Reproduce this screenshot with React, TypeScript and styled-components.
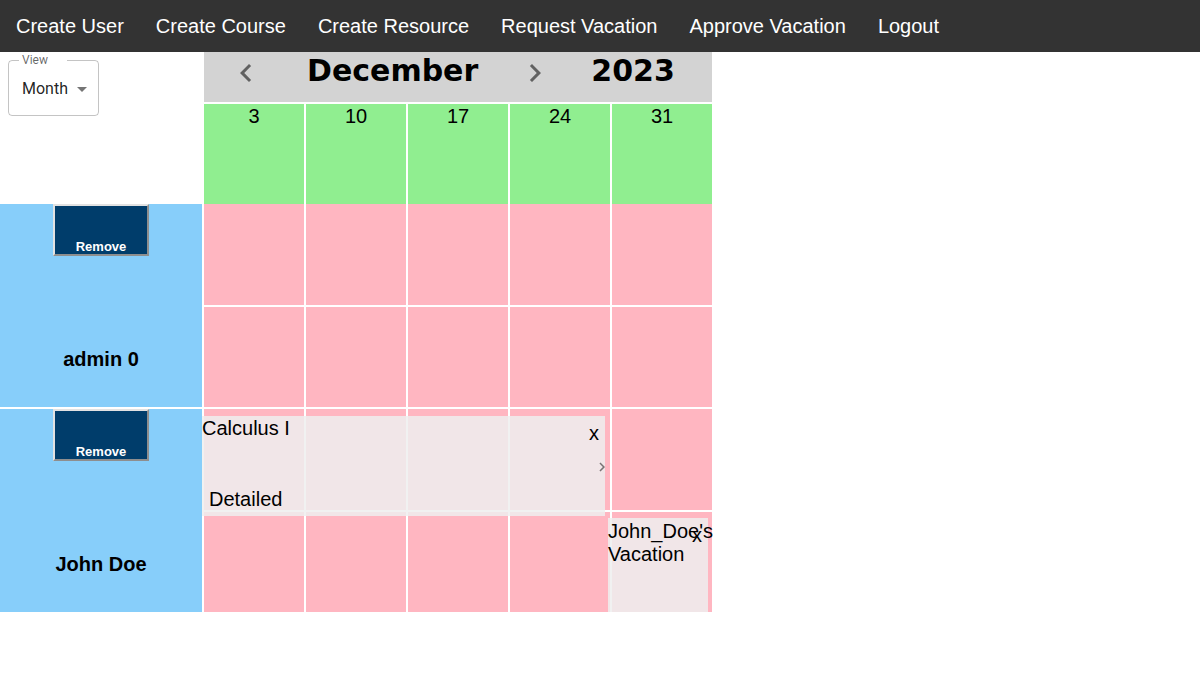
import React from "react";
import styled, { createGlobalStyle } from "styled-components";

const GlobalStyle = createGlobalStyle`
  html, body { margin: 0; padding: 0; background: #ffffff; }
  body { font-family: "Liberation Sans", Arial, sans-serif; color: #000; }
  * { box-sizing: border-box; }
`;

const NavBar = styled.nav`
  display: flex;
  align-items: center;
  height: 52px;
  background: #333333;
`;

const NavLink = styled.a`
  color: #ffffff;
  font-size: 20px;
  line-height: 52px;
  padding: 0 16px;
  text-decoration: none;
  cursor: pointer;
`;

const Board = styled.div`
  display: flex;
  flex-direction: column;
  width: 712px;
`;

const TopSection = styled.div`
  display: grid;
  grid-template-columns: 202px repeat(5, 100px);
  grid-template-rows: 50px 100px;
  column-gap: 2px;
  row-gap: 2px;
`;

const UserList = styled.div`
  display: flex;
  flex-direction: column;
  gap: 2px;
`;

const ViewCell = styled.div`
  grid-column: 1;
  grid-row: 1 / span 2;
  padding: 8px;
  background: #ffffff;
`;

const SelectBox = styled.div`
  position: relative;
  width: 91px;
  height: 56px;
  border: 1px solid rgba(0, 0, 0, 0.23);
  border-radius: 4px;
  display: flex;
  align-items: center;
  padding-left: 13px;
  padding-top: 1px;
  font-family: Roboto, "Liberation Sans", sans-serif;
  font-size: 16px;
  color: rgba(0, 0, 0, 0.87);
`;

const SelectLabel = styled.span`
  position: absolute;
  left: 10px;
  top: -7px;
  width: 48px;
  padding-left: 3px;
  background: #ffffff;
  font-size: 12px;
  line-height: 12px;
  color: rgba(0, 0, 0, 0.6);
`;

const SelectValue = styled.span`
  line-height: 23px;
`;

const MonthHeader = styled.div`
  grid-column: 2 / span 5;
  grid-row: 1;
  background: #d3d3d3;
  display: flex;
  align-items: flex-start;
`;

const NavArrow = styled.svg<{ $ml: number }>`
  width: 36px;
  height: 36px;
  margin-top: 3px;
  margin-left: ${(p) => p.$ml}px;
  fill: rgba(0, 0, 0, 0.54);
  flex: none;
`;

const HeaderText = styled.span<{ $ml: number }>`
  font-family: "DejaVu Sans", Verdana, sans-serif;
  font-weight: bold;
  font-size: 30px;
  line-height: 35px;
  margin-left: ${(p) => p.$ml}px;
  padding-top: 1px;
`;

const DateCell = styled.div`
  grid-row: 2;
  background: #90ee90;
  text-align: center;
  font-size: 20px;
  line-height: 24px;
`;

const UserBlock = styled.div`
  position: relative;
  display: grid;
  grid-template-columns: 202px repeat(5, 100px);
  grid-template-rows: 101px 100px;
  column-gap: 2px;
  row-gap: 2px;
`;

const UserLabel = styled.div`
  grid-column: 1;
  grid-row: 1 / span 2;
  background: #87cefa;
  display: flex;
  flex-direction: column;
  align-items: center;
`;

const RemoveButton = styled.button`
  width: 96px;
  height: 52px;
  background: #003d6b;
  border-width: 2px;
  border-style: solid;
  border-color: #e2e2e2 #8e8e8e #8e8e8e #e2e2e2;
  color: #ffffff;
  font-family: "Liberation Sans", Arial, sans-serif;
  font-weight: bold;
  font-size: 13px;
  line-height: 15px;
  display: flex;
  align-items: flex-end;
  justify-content: center;
  padding: 0;
  cursor: pointer;
`;

const UserName = styled.div`
  margin-top: 92px;
  font-weight: bold;
  font-size: 20px;
  line-height: 23px;
`;

const SlotCell = styled.div`
  background: #ffb6c1;
`;

const EventBox = styled.div<{ $left: number; $top: number; $width: number }>`
  position: absolute;
  left: ${(p) => p.$left}px;
  top: ${(p) => p.$top}px;
  width: ${(p) => p.$width}px;
  height: 100px;
  background: rgba(238, 238, 238, 0.85);
  font-size: 20px;
  line-height: 23px;
  padding-top: ${(p) => (p.$width > 200 ? 1 : 2)}px;
`;

const EventTitle = styled.div`
  padding-right: 8px;
`;

const EventDetail = styled.div`
  margin-top: 48px;
  padding-left: 7px;
`;

const CloseMark = styled.span`
  position: absolute;
  top: 6px;
  right: 6px;
  font-size: 20px;
  line-height: 23px;
  cursor: pointer;
`;

const SmallArrow = styled.svg`
  position: absolute;
  left: 391px;
  top: 42px;
  width: 18px;
  height: 18px;
  fill: rgba(0, 0, 0, 0.5);
`;

const DropArrow = styled.svg`
  width: 24px;
  height: 24px;
  margin-left: 2px;
  fill: rgba(0, 0, 0, 0.54);
`;

const dates = [3, 10, 17, 24, 31];

const Slots = () => (
  <>
    {Array.from({ length: 10 }).map((_, i) => (
      <SlotCell key={i} />
    ))}
  </>
);

export default function App() {
  return (
    <>
      <GlobalStyle />
      <NavBar>
        <NavLink>Create User</NavLink>
        <NavLink>Create Course</NavLink>
        <NavLink>Create Resource</NavLink>
        <NavLink>Request Vacation</NavLink>
        <NavLink>Approve Vacation</NavLink>
        <NavLink>Logout</NavLink>
      </NavBar>
      <Board>
        <TopSection>
          <ViewCell>
            <SelectBox>
              <SelectLabel>View</SelectLabel>
              <SelectValue>Month</SelectValue>
              <DropArrow viewBox="0 0 24 24">
                <path d="M7 10l5 5 5-5z" />
              </DropArrow>
            </SelectBox>
          </ViewCell>
          <MonthHeader>
            <NavArrow $ml={24} viewBox="0 0 24 24">
              <path d="M15.41 7.41 14 6l-6 6 6 6 1.41-1.41L10.83 12z" />
            </NavArrow>
            <HeaderText $ml={43}>December</HeaderText>
            <NavArrow $ml={39} viewBox="0 0 24 24">
              <path d="M10 6 8.59 7.41 13.17 12l-4.58 4.59L10 18l6-6z" />
            </NavArrow>
            <HeaderText $ml={38}>2023</HeaderText>
          </MonthHeader>
          {dates.map((d) => (
            <DateCell key={d}>{d}</DateCell>
          ))}
        </TopSection>

        <UserList>
          <UserBlock>
            <UserLabel>
              <RemoveButton>Remove</RemoveButton>
              <UserName>admin 0</UserName>
            </UserLabel>
            <Slots />
          </UserBlock>

          <UserBlock>
            <UserLabel>
              <RemoveButton>Remove</RemoveButton>
              <UserName>John Doe</UserName>
            </UserLabel>
            <Slots />
            <EventBox $left={202} $top={7} $width={403}>
              <EventTitle>Calculus I</EventTitle>
              <CloseMark>x</CloseMark>
              <SmallArrow viewBox="0 0 24 24">
                <path d="M10 6 8.59 7.41 13.17 12l-4.58 4.59L10 18l6-6z" />
              </SmallArrow>
              <EventDetail>Detailed</EventDetail>
            </EventBox>
            <EventBox $left={608} $top={109} $width={100}>
              <div>John_Doe's Vacation</div>
              <CloseMark>x</CloseMark>
            </EventBox>
          </UserBlock>
        </UserList>
      </Board>
    </>
  );
}
